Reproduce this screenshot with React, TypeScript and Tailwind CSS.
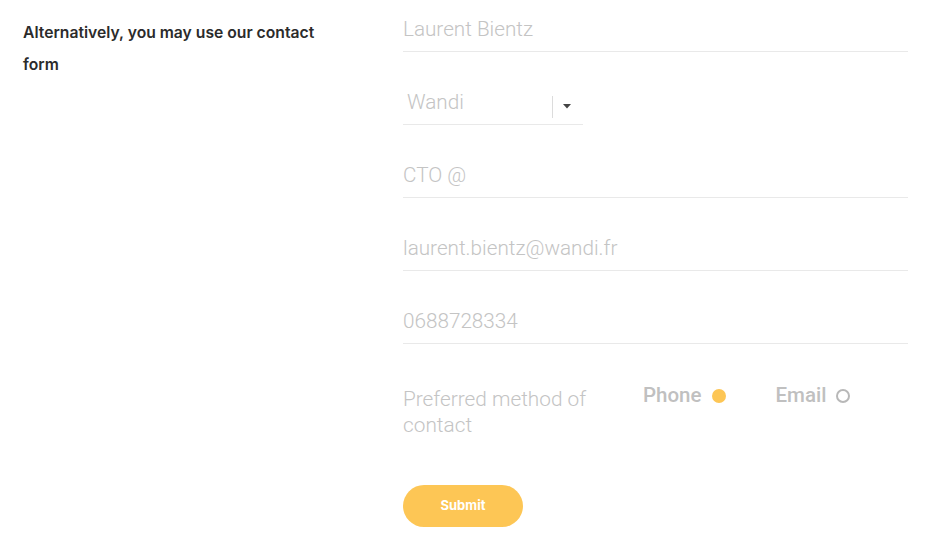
import React from "react";

function Field({ value }: { value: string }) {
  return (
    <div className="mt-[21px] h-[52px] border-b border-[#e9e9e9] pt-[15px] text-[20.7px] leading-[28px] font-light text-[#c4c4c4]">
      {value}
    </div>
  );
}

export default function App() {
  return (
    <div className="flex h-[541px] w-[940px] bg-white font-['Roboto',sans-serif]">
      <div className="w-[403px] shrink-0 pl-[23px] pt-[17px]">
        <p className="w-[310px] font-['Inter',sans-serif] text-[15.7px] font-semibold leading-[32px] text-[#2b2b2b]">
          Alternatively, you may use our contact form
        </p>
      </div>
      <div className="w-[505px] shrink-0">
        <div className="h-[52px] border-b border-[#e9e9e9] pt-[15px] text-[20.7px] leading-[28px] font-light text-[#c4c4c4]">
          Laurent Bientz
        </div>
        <div className="mt-[21px] flex h-[52px] w-[180px] items-start border-b border-[#e9e9e9] pt-[15px]">
          <span className="flex-1 pl-[4px] text-[20.7px] leading-[28px] font-light text-[#c4c4c4]">Wandi</span>
          <span className="mt-[8px] h-[22px] w-px bg-[#dcdcdc]" />
          <svg className="ml-[10px] mt-[16px]" width="8" height="5" viewBox="0 0 8 5">
            <path d="M0 0 L8 0 L4 4.5 Z" fill="#444" />
          </svg>
          <span className="w-[12px]" />
        </div>
        <Field value="CTO @" />
        <Field value="laurent.bientz@wandi.fr" />
        <Field value="0688728334" />
        <div className="mt-[42px] flex items-start">
          <div className="w-[240px] text-[20.8px] leading-[26px] font-light text-[#c4c4c4]">
            Preferred method of
            <br />
            contact
          </div>
          <div className="-mt-[4px] flex items-center">
            <span className="text-[20.5px] leading-[26px] font-medium text-[#c0c0c0]">Phone</span>
            <span className="ml-[10px] mt-[2px] h-[14px] w-[14px] rounded-full bg-[#fdc655]" />
            <span className="ml-[50px] text-[20.5px] leading-[26px] font-medium text-[#c0c0c0]">Email</span>
            <span className="ml-[10px] mt-[2px] h-[14px] w-[14px] rounded-full border-2 border-[#b8b8b8]" />
          </div>
        </div>
        <button className="mt-[47px] flex h-[42px] w-[120px] items-center justify-center rounded-full bg-[#fdc655] font-['Inter',sans-serif] text-[13px] font-bold text-white">
          Submit
        </button>
      </div>
    </div>
  );
}
